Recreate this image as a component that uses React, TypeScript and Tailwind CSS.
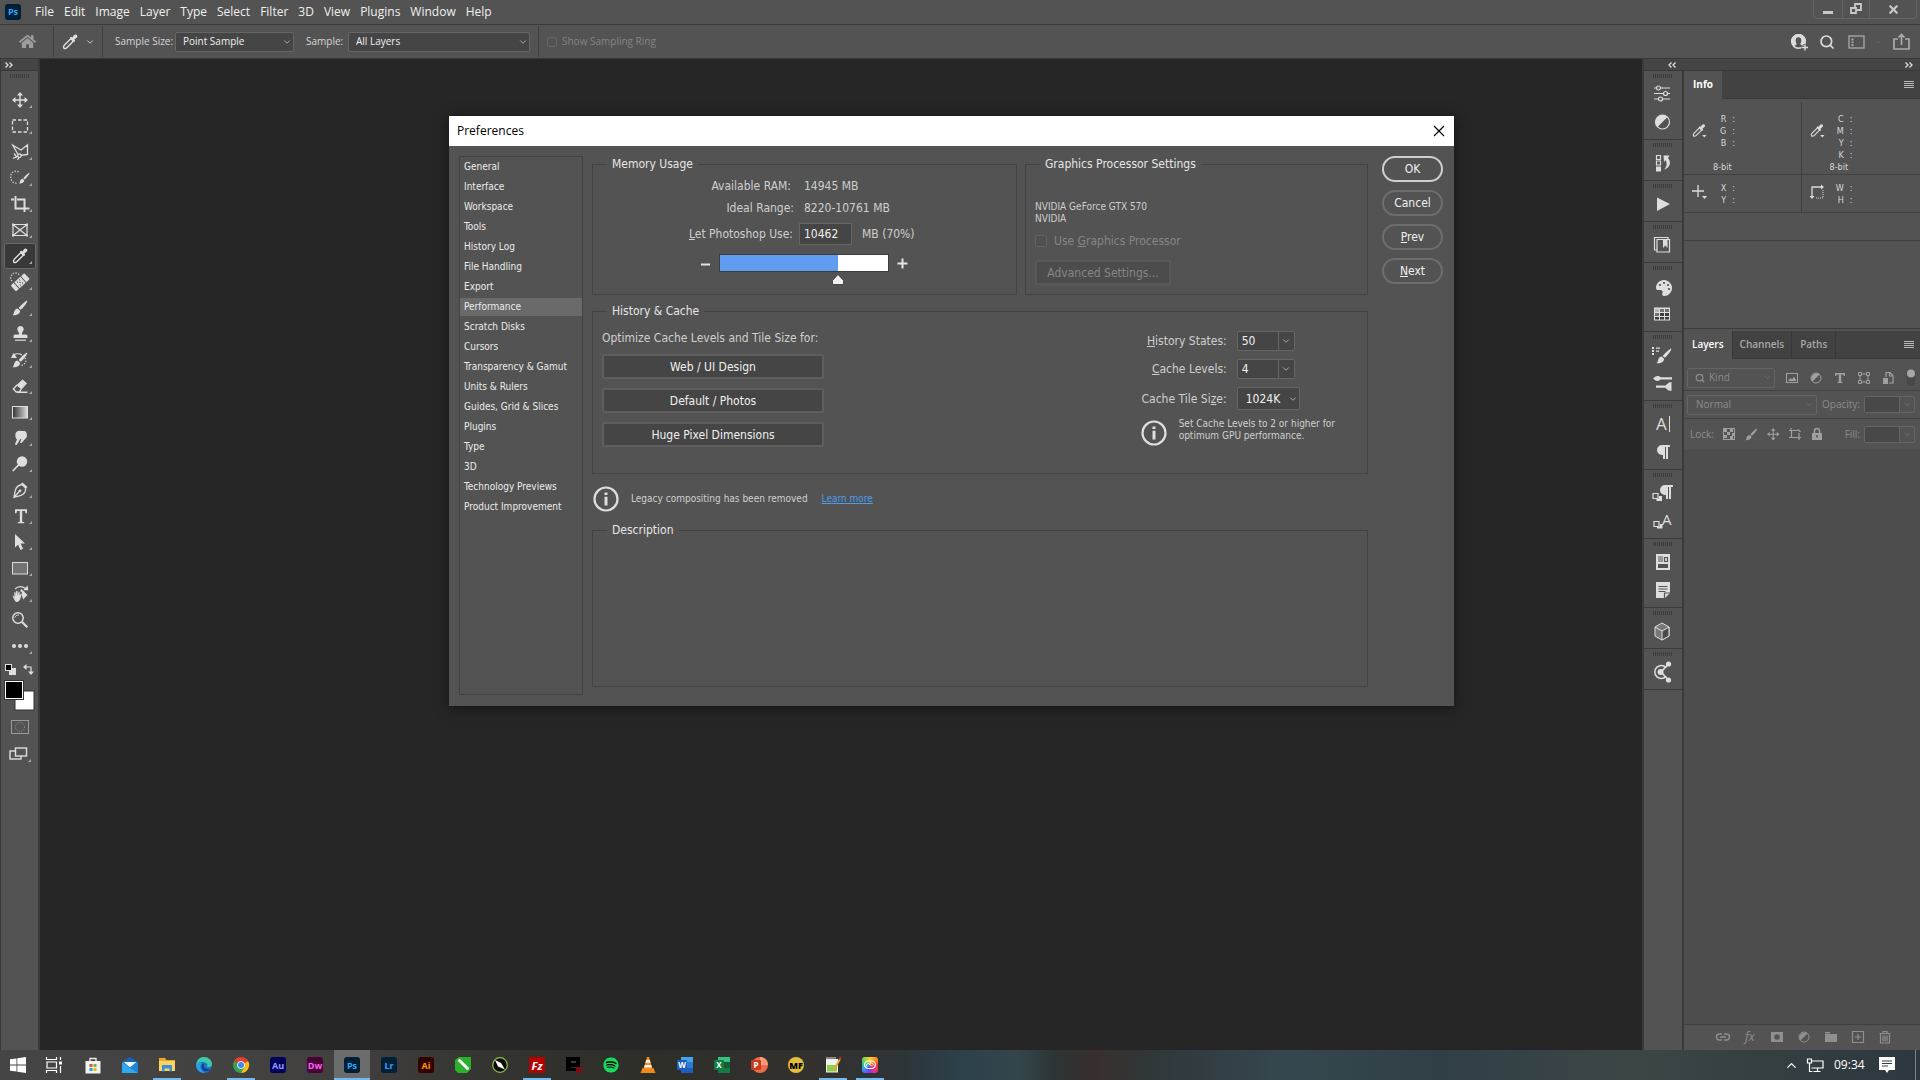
import React, { useState } from 'react'
import { ChevronDown, ChevronUp, Search, X } from 'lucide-react'
import { FaPalette, FaParagraph, FaSpotify, FaHome } from 'react-icons/fa'

const UI_FONT = "font-['Open_Sans','Noto_Sans',sans-serif]"
const DIALOG_FONT = "font-['DejaVu_Sans_Condensed','DejaVu_Sans',sans-serif]"

const MENUS = ['File', 'Edit', 'Image', 'Layer', 'Type', 'Select', 'Filter', '3D', 'View', 'Plugins', 'Window', 'Help']

const SECTIONS = [
  'General',
  'Interface',
  'Workspace',
  'Tools',
  'History Log',
  'File Handling',
  'Export',
  'Performance',
  'Scratch Disks',
  'Cursors',
  'Transparency & Gamut',
  'Units & Rulers',
  'Guides, Grid & Slices',
  'Plugins',
  'Type',
  '3D',
  'Technology Previews',
  'Product Improvement',
]

function Glyph({
  w,
  h,
  className = '',
  children,
}: {
  w: number
  h: number
  className?: string
  children: React.ReactNode
}) {
  return (
    <svg
      width={w}
      height={h}
      viewBox={`0 0 ${w} ${h}`}
      fill="none"
      stroke="none"
      aria-hidden="true"
      className={`shrink-0 overflow-visible ${className}`}
    >
      {children}
    </svg>
  )
}

/* Shared drawings, 16x16 */
function EyedropperShape() {
  return (
    <>
      <path d="M9 4.500 2.500 11c-.9.9-1.300 2.600-.6 3.200.6.700 2.300.3 3.200-.6L11.500 7" stroke="currentColor" strokeWidth="1.400" />
      <path
        d="M8 3.600 9.300 2.700l1 .8L12 1.200c.8-1 2-1 2.800-.2s.8 2-.2 2.800L12.400 5.600l.8 1-.9 1.400-1.300-.2L8 4.800Z"
        fill="currentColor"
      />
    </>
  )
}

function BrushShape() {
  return (
    <>
      <path d="M14.800.5c.5.300.6.9.3 1.400C13.300 5 11.200 7.600 8.700 9.800L6.600 7.900C9 5.300 11.500 2.700 14.800.5Z" fill="currentColor" />
      <path d="M5.700 8.600 8 10.700c.3 2.600-2.600 4.800-7.400 4.500C2.300 13.900 1.600 12.500 2.700 10.600c.7-1.300 1.700-1.900 3-2Z" fill="currentColor" />
    </>
  )
}

function MoveShape() {
  return (
    <>
      <path d="M8 2v12M2 8h12" stroke="currentColor" strokeWidth="1.400" />
      <path d="M8 0 11 3.500H5ZM8 16l3-3.500H5ZM0 8l3.500-3v6ZM16 8l-3.500-3v6Z" fill="currentColor" />
    </>
  )
}

const TOOLS: { name: string; icon: React.ReactNode }[] = [
  { name: 'Move', icon: <MoveShape /> },
  {
    name: 'Rectangular Marquee',
    icon: <rect x="0.500" y="2" width="15" height="12" stroke="currentColor" strokeWidth="1.300" strokeDasharray="3.500 2" />,
  },
  {
    name: 'Polygonal Lasso',
    icon: (
      <path
        d="M6 10.500.800 1.200 9 6l6.500-5.200v9.700L8.500 11.500M7.500 9.800a1.800 1.800 0 1 0 .1 0ZM6 12 1 14.500M5 13.500 2 9.500M7.200 13.200 5.500 16"
        stroke="currentColor"
        strokeWidth="1.300"
      />
    ),
  },
  {
    name: 'Quick Selection',
    icon: (
      <>
        <path d="M8.500 3A5.200 6 0 1 0 7 14" stroke="currentColor" strokeWidth="1.300" strokeDasharray="1.200 1.600" transform="translate(-2 -1)" />
        <g transform="translate(6.500 2.500) scale(.72)">
          <BrushShape />
        </g>
      </>
    ),
  },
  {
    name: 'Crop',
    icon: <path d="M3.500 0v12.500H15M-1 3.500h3M5 3.500h7.500V16M14 12.500h3.500" stroke="currentColor" strokeWidth="2" />,
  },
  {
    name: 'Frame',
    icon: (
      <>
        <path d="M1 2.500h14v11H1ZM1 2.500l14 11M15 2.500l-14 11" stroke="currentColor" strokeWidth="1.200" />
        <path d="M0 1.500h2v2H0ZM14 1.500h2v2h-2ZM0 12.500h2v2H0ZM14 12.500h2v2h-2Z" fill="currentColor" />
      </>
    ),
  },
  { name: 'Eyedropper', icon: <EyedropperShape /> },
  {
    name: 'Healing Brush',
    icon: (
      <>
        <path d="M8 1.500A4.500 4.500 0 0 0 1 8" stroke="currentColor" strokeWidth="1.300" strokeDasharray="1.200 1.500" transform="translate(-1 -1)" />
        <g transform="rotate(-42 8 8.500)">
          <path d="M-1 5.500Q-1 4.500 0 4.500h3v8H0q-1 0-1-1ZM13 4.500h3.500q1 0 1 1v6q0 1-1 1H13ZM4 4.500h8v8H4Z" fill="currentColor" />
          <path d="M6 6.500h1M9 6.500h1M6 10.500h1M9 10.500h1M7.500 8.500h1" stroke="#424242" strokeWidth="1.400" />
        </g>
      </>
    ),
  },
  { name: 'Brush', icon: <BrushShape /> },
  {
    name: 'Clone Stamp',
    icon: (
      <>
        <path d="M8.500 0a3.200 3.200 0 0 1 2.500 5.200C10 6.500 9.800 7.500 9.900 8.500H14q1.500 0 1.500 1.500v2h-14v-2q0-1.500 1.500-1.500h4.100c.1-1-.1-2-1.100-3.300A3.200 3.200 0 0 1 8.500 0Z" fill="currentColor" />
        <path d="M3 14.200h11" stroke="currentColor" strokeWidth="1.200" />
      </>
    ),
  },
  {
    name: 'History Brush',
    icon: (
      <>
        <BrushShape />
        <path d="M1 3.200C4 1.400 8 1.700 10 3" stroke="currentColor" strokeWidth="1.200" />
        <path d="M1.500 1 5 6h-6Z" fill="currentColor" />
        <path d="M13 6c2 3 .5 6-3.500 7.500" stroke="currentColor" strokeWidth="1.300" strokeDasharray="1.200 1.600" />
      </>
    ),
  },
  {
    name: 'Eraser',
    icon: (
      <>
        <path d="m10.500 2 4 3.500-5 5.500L5 7.200Z" fill="currentColor" stroke="currentColor" />
        <path d="M5 7 1.300 11l3 3h3l2-2.800M5 14.200h10.500" stroke="currentColor" strokeWidth="1.400" />
      </>
    ),
  },
  {
    name: 'Gradient',
    icon: (
      <>
        <defs>
          <linearGradient id="tool-gradient">
            <stop stopColor="#333" />
            <stop offset="1" stopColor="#ddd" />
          </linearGradient>
        </defs>
        <rect x="0.500" y="2.500" width="15" height="11.500" fill="url(#tool-gradient)" stroke="currentColor" />
      </>
    ),
  },
  {
    name: 'Smudge',
    icon: (
      <path
        d="M3.500 3.500C4.500 1 7 .5 9 1h4c1.500 1 2.300 3 1.800 5.500-.3 1.700-2 2.500-3 4L9.500 13l-1.600-.3 1.500-3.500-1-.3-3.600 5.800c-.6.800-2 .3-1.600-.9L5 9.500c-1.500-1-2-3.500-1.500-6Z"
        fill="currentColor"
      />
    ),
  },
  {
    name: 'Dodge',
    icon: (
      <>
        <circle cx="10" cy="5.500" r="5.200" fill="currentColor" />
        <path d="M6.500 9 .8 15" stroke="currentColor" strokeWidth="1.800" />
      </>
    ),
  },
  {
    name: 'Pen',
    icon: (
      <>
        <path d="m10 2.500 3.500 3.300c.5 3-1 6-4.500 7.500l-7 2 1.200-6.500C4.200 5 6.500 3 10 2.500ZM2.500 14.800l5-5.500" stroke="currentColor" strokeWidth="1.300" />
        <circle cx="8" cy="8.800" r="1.400" fill="currentColor" />
        <path d="m10.500.5 5 4.500-1.600 1.600-5-4.500Z" fill="currentColor" />
      </>
    ),
  },
  {
    name: 'Horizontal Type',
    icon: <path d="M3 1.200h12v4h-1.500L13 3h-2.800v10.800l2 .4v1.100H5.800v-1.100l2-.4V3H5l-.5 2.200H3Z" fill="currentColor" />,
  },
  {
    name: 'Path Selection',
    icon: <path d="M3 0v13.500l3-2.800L8.500 16l2.600-1.300L8.700 9.600H13Z" fill="currentColor" />,
  },
  {
    name: 'Rectangle',
    icon: <rect x="0.500" y="2.500" width="15" height="11.500" fill="#737373" stroke="currentColor" />,
  },
  {
    name: 'Rotate View',
    icon: (
      <>
        <path d="M3 3C6 0 10 0 13.500 2.500" stroke="currentColor" strokeWidth="1.200" />
        <path d="m15.500-.500.8 4.800h-5ZM9.500 3 15.500 9 11 13.500 9.800 9V6L8 5Z" fill="currentColor" />
        <path d="M.5 9.500c.6-.3 1.200 0 1.600.8l.7.9-.6-4.500c0-1 1.200-1 1.400 0l.4 2.600.1-4c.1-.9 1.300-.9 1.400 0l.2 3.900.7-3.200c.3-.8 1.400-.6 1.300.3l-.4 3.500.9-1.700c.5-.7 1.500-.3 1.300.5-.8 3-1.200 7.200-4.600 7.400C3 16.200 2 13 .5 9.500Z" fill="currentColor" />
      </>
    ),
  },
  {
    name: 'Zoom',
    icon: (
      <>
        <circle cx="6" cy="6" r="5.200" stroke="currentColor" strokeWidth="1.500" />
        <path d="M3 5.500C3.500 3.500 5 3 7 3" stroke="currentColor" />
        <path d="m10 10 5.300 5.300" stroke="currentColor" strokeWidth="2.200" />
      </>
    ),
  },
  {
    name: 'More Tools',
    icon: (
      <>
        <circle cx="2" cy="8" r="2" fill="currentColor" />
        <circle cx="8" cy="8" r="2" fill="currentColor" />
        <circle cx="14" cy="8" r="2" fill="currentColor" />
      </>
    ),
  },
]

function Grip() {
  return <div className="h-1 w-5 bg-[repeating-linear-gradient(90deg,#3c3c3c_0_1px,#535353_1px_2px)]" />
}

function MenuBar() {
  return (
    <header className="flex h-6 items-center">
      <span className="ml-[5px] flex size-4 items-center justify-center rounded-[3px] bg-[#001e36] text-[9px] font-bold text-[#31a8ff]">
        Ps
      </span>
      <nav className="ml-[9px] flex">
        {MENUS.map((m) => (
          <button key={m} type="button" className="px-[5px] text-[12px] leading-6 text-[#f0f0f0]">
            {m}
          </button>
        ))}
      </nav>
      <div className="mr-[3px] ml-auto flex h-[19px] self-start rounded-b-sm border border-t-0 border-[#646464] text-[#c8c8c8]">
        <button type="button" aria-label="Minimize" className="flex w-7 items-end justify-center pb-1">
          <span className="h-[3px] w-[10px] bg-current" />
        </button>
        <button type="button" aria-label="Restore" className="flex w-7 items-center justify-center border-x border-[#646464]">
          <Glyph w={12} h={12}>
            <path d="M5 1h6v6H5Z" stroke="currentColor" strokeWidth="1.800" />
            <path d="M1 5h5v5H1Z" fill="#535353" stroke="currentColor" strokeWidth="1.800" />
          </Glyph>
        </button>
        <button type="button" aria-label="Close" className="flex w-[46px] items-center justify-center">
          <X size={13} strokeWidth={4} />
        </button>
      </div>
    </header>
  )
}

function OptionSelect({ id, value, className }: { id: string; value: string; className: string }) {
  return (
    <div className={`relative flex h-5 items-center ${className}`}>
      <select
        id={id}
        className="h-full w-full appearance-none rounded-[2px] border border-[#666] bg-[#454545] pl-[7px] text-[10px] text-[#f0f0f0]"
      >
        <option>{value}</option>
      </select>
      <ChevronDown size={10} className="pointer-events-none absolute right-[2px] text-[#bdbdbd]" />
    </div>
  )
}

function OptionsBar() {
  return (
    <div className="flex h-[35px] items-center border-y border-[#383838] text-[10px] text-[#d6d6d6]">
      <button type="button" aria-label="Home" className="ml-[19px] text-[#9d9d9d]">
        <FaHome size={17} />
      </button>
      <span className="ml-[17px] h-[31px] w-px bg-[#404040]" />
      <button type="button" aria-label="Eyedropper presets" className="ml-2 flex items-center gap-[7px] text-[#e0e0e0]">
        <Glyph w={16} h={16}>
          <EyedropperShape />
        </Glyph>
        <ChevronDown size={10} />
      </button>
      <span className="ml-[7px] h-[31px] w-px bg-[#404040]" />
      <label htmlFor="sample-size" className="ml-3 w-[60px]">
        Sample Size:
      </label>
      <OptionSelect id="sample-size" value="Point Sample" className="w-[119px]" />
      <label htmlFor="sample" className="ml-3 w-[42px]">
        Sample:
      </label>
      <OptionSelect id="sample" value="All Layers" className="w-[182px]" />
      <span className="ml-2 h-[31px] w-px bg-[#404040]" />
      <label className="ml-2 flex items-center gap-[5px] text-[#848484]">
        <input type="checkbox" disabled className="size-[10px] appearance-none rounded-[2px] border border-[#666]" />
        Show Sampling Ring
      </label>
      <div className="mr-[10px] ml-auto flex items-center text-[#dcdcdc]">
        <button type="button" aria-label="Account">
          <Glyph w={18} h={18}>
            <circle cx="8.500" cy="8.500" r="6.800" stroke="currentColor" strokeWidth="1.500" />
            <path
              d="M8.500 1C13 1 16 4.500 16 8.500l-3.600 4.300c-.8-.9-2-1-2.200-1.800 1.500-1.500 2-6.700-1.700-6.700S5.300 9.500 6.800 11c-.2.900-1.600.9-2.600 2.300L1 9C1 4.500 4.500 1 8.500 1Z"
              fill="currentColor"
            />
            <path d="M15 11v7M11.500 14.500h7" stroke="#535353" strokeWidth="3" />
            <path d="M15 11.500v6M12 14.500h6" stroke="currentColor" strokeWidth="1.400" />
          </Glyph>
        </button>
        <button type="button" aria-label="Search" className="ml-[11px]">
          <Search size={16} strokeWidth={2.5} />
        </button>
        <button type="button" aria-label="Workspace" className="ml-[13px] flex items-center gap-2 text-[#aaa]">
          <Glyph w={17} h={14}>
            <rect x="1" y="1" width="15" height="12" stroke="currentColor" strokeWidth="1.300" />
            <path d="M3.500 3.500h2v2h-2ZM3.500 6.500h2v1.500h-2ZM3.500 9h2v2h-2Z" fill="currentColor" />
          </Glyph>
          <ChevronDown size={10} className="text-[#666]" />
        </button>
        <button type="button" aria-label="Share" className="ml-[10px] text-[#aaa]">
          <Glyph w={17} h={17}>
            <path d="M5 6H1v10h15V6h-4M8.500 12V2M5.500 4.500l3-3 3 3" stroke="currentColor" strokeWidth="1.700" />
          </Glyph>
        </button>
      </div>
    </div>
  )
}

function DoubleChevron({ left }: { left?: boolean }) {
  return (
    <Glyph w={8} h={6} className="text-[#e0e0e0]">
      <path
        d={left ? 'M3.500.500 1 3l2.500 2.500M7.500.500 5 3l2.500 2.500' : 'M.500.500 3 3 .500 5.500M4.500.500 7 3 4.500 5.500'}
        stroke="currentColor"
        strokeWidth="1.300"
      />
    </Glyph>
  )
}

function Toolbar() {
  const [tool, setTool] = useState('Eyedropper')

  return (
    <aside className="flex w-10 shrink-0 flex-col border-x border-[#3a3a3a] border-r-2 text-[#dedede]">
      <div className="flex h-3 items-center border-b border-[#383838] bg-[#454545] pl-1">
        <DoubleChevron />
      </div>
      <div className="flex flex-col items-center pt-[3px]">
        <Grip />
        <div className="mt-[9px] flex flex-col">
          {TOOLS.map(({ name, icon }) => (
            <button
              key={name}
              type="button"
              aria-label={name}
              onClick={() => setTool(name)}
              className={`flex h-[26px] w-8 items-center justify-center rounded-[2px] border ${
                tool === name ? 'border-[#6a6a6a] bg-[#383838]' : 'border-transparent'
              }`}
            >
              <Glyph w={30} h={24}>
                <g transform="translate(7 4)">{icon}</g>
                {name !== 'Zoom' && <path d="M27 17v3h-3Z" fill="#a8a8a8" />}
              </Glyph>
            </button>
          ))}
        </div>
        <div className="flex h-5 w-[30px] items-center gap-[7px]">
          <Glyph w={11} h={11}>
            <rect x="4" y="4" width="7" height="7" fill="#dedede" />
            <rect x="0.500" y="0.500" width="6" height="6" fill="#000" stroke="#dedede" />
          </Glyph>
          <Glyph w={11} h={11}>
            <path d="M2 3h6v6" stroke="currentColor" strokeWidth="1.200" />
            <path d="M0 3 3.500 0v6ZM8 11 5 7.500h6Z" fill="currentColor" />
          </Glyph>
        </div>
        <Glyph w={31} h={31} className="mt-px">
          <rect x="11" y="11" width="19" height="19" fill="#fff" stroke="#333" />
          <rect x="0.500" y="0.500" width="19" height="19" fill="#fff" stroke="#333" />
          <rect x="2" y="2" width="16" height="16" fill="#000" />
        </Glyph>
        <button type="button" aria-label="Quick Mask" className="mt-[9px] text-[#9a9a9a]">
          <Glyph w={18} h={14}>
            <rect x="0.500" y="0.500" width="17" height="13" stroke="currentColor" />
            <circle cx="9" cy="7" r="4.500" stroke="currentColor" strokeDasharray="1 1.400" />
          </Glyph>
        </button>
        <button type="button" aria-label="Screen Mode" className="mt-3">
          <Glyph w={22} h={16}>
            <rect x="1" y="5" width="11" height="8" stroke="currentColor" strokeWidth="1.400" />
            <rect x="6.500" y="2" width="11" height="8" fill="#535353" stroke="currentColor" strokeWidth="1.400" />
            <path d="M22 13v3h-3Z" fill="#a8a8a8" />
          </Glyph>
        </button>
      </div>
    </aside>
  )
}

const DOCK_GROUPS: { name: string; icon: React.ReactNode }[][] = [
  [
    {
      name: 'Properties',
      icon: (
        <>
          <path d="M0 2h16M0 7.500h16M0 13h16" stroke="currentColor" strokeWidth="1.200" />
          <g fill="#535353" stroke="currentColor" strokeWidth="1.200">
            <circle cx="4.500" cy="2" r="2" />
            <circle cx="11.500" cy="7.500" r="2" />
            <circle cx="6.500" cy="13" r="2" />
          </g>
        </>
      ),
    },
    {
      name: 'Adjustments',
      icon: (
        <>
          <circle cx="8.500" cy="8" r="7" stroke="currentColor" strokeWidth="1.200" />
          <path d="M3.500 13A7 7 0 0 1 13.500 3Z" fill="currentColor" />
        </>
      ),
    },
  ],
  [
    {
      name: 'History',
      icon: (
        <>
          <path d="M2.500.500h4v4h-4ZM2.500 6h4v4h-4Z" stroke="currentColor" strokeWidth="1.200" />
          <path d="M2 11.500h5v5H2Z" fill="currentColor" />
          <path d="M9.500.500h6L14 3c4 5 1.500 10-4 11.500 3-3 3.500-6 1.500-9.500L10 7Z" fill="currentColor" />
        </>
      ),
    },
  ],
  [{ name: 'Actions', icon: <path d="M3 1.500 16 8 3 15Z" fill="currentColor" /> }],
  [
    {
      name: 'Libraries',
      icon: (
        <>
          <path d="M2.500 13H.5V.5H14V2M3 2.500h12.500V15H3Z" stroke="currentColor" strokeWidth="1.200" />
          <path d="M9 3h4.500v8L11.300 8.500 9 11Z" fill="currentColor" />
        </>
      ),
    },
  ],
  [
    {
      name: 'Color',
      icon: (
        <g transform="translate(17 2) scale(-1 1)">
          <FaPalette x="-1" y="0" width="18" height="13" preserveAspectRatio="none" color="#dedede" />
        </g>
      ),
    },
    {
      name: 'Swatches',
      icon: (
        <>
          <path d="M0 1.500h16v13H0Z" fill="currentColor" />
          <path d="M1 3h4v3H1Z" fill="#b5b5b5" />
          <path d="M6 3h4v3H6ZM11 3h4v3h-4ZM1 7h4v3H1Z" fill="#707070" />
          <path d="M6 7h4v3H6ZM11 7h4v3h-4ZM1 11h4v2.500H1ZM6 11h4v2.500H6ZM11 11h4v2.500h-4Z" fill="#3c3c3c" />
        </>
      ),
    },
  ],
  [
    {
      name: 'Brush Settings',
      icon: (
        <>
          <path d="M-2 0h2v2h-2ZM2 .5h4v1.300H2ZM-2 3h2v2h-2ZM2 3.500h3v1.300H2ZM-2 6h2v2h-2Z" fill="currentColor" />
          <g transform="translate(2 1)">
            <BrushShape />
          </g>
        </>
      ),
    },
    {
      name: 'Brushes',
      icon: (
        <>
          <path d="M-1 3.500C2 0 5.500.5 6.500 2.300H18v2.300H6.500C5 6.500 1.500 6.500-1 3.500ZM2 10.500h9v2.300H2Z" fill="currentColor" />
          <path d="M10 11.500c2-1 4-4.500 7.500-4.500v9c-4 0-5.500-3-7.500-4.500Z" fill="currentColor" />
        </>
      ),
    },
  ],
  [
    {
      name: 'Character',
      icon: (
        <>
          <text x="2" y="14" fontSize="17" fill="currentColor" fontFamily="Open Sans">
            A
          </text>
          <path d="M15.500 0v16" stroke="currentColor" />
        </>
      ),
    },
    { name: 'Paragraph', icon: <FaParagraph x="1" y="0" width="15" height="15" color="#dedede" /> },
  ],
  [
    {
      name: 'Paragraph Styles',
      icon: (
        <>
          <FaParagraph x="4" y="-1" width="12" height="13" color="#dedede" />
          <path d="M-1 8.500h5v5h-5Z" fill="#535353" stroke="currentColor" strokeWidth="1.200" />
          <path d="M5 11h3v5H2.500v-2H5Z" fill="currentColor" />
        </>
      ),
    },
    {
      name: 'Character Styles',
      icon: (
        <>
          <text x="8" y="12" fontSize="15" fill="currentColor" fontFamily="Open Sans">
            A
          </text>
          <path d="M0 8.500h5v5H0Z" fill="#535353" stroke="currentColor" strokeWidth="1.200" />
          <path d="M6 11h2.500v4.500H3V14h3Z" fill="currentColor" />
        </>
      ),
    },
  ],
  [
    {
      name: 'Layer Comps',
      icon: (
        <>
          <path d="M2 0h14v16H2Z" fill="currentColor" />
          <path d="M4 3h5M4 5h5M4 7h5M10.500 3.500h3v4h-3Z" stroke="#535353" strokeWidth="1.200" />
          <path d="M4 10h10v4H4Z" fill="#535353" />
        </>
      ),
    },
    {
      name: 'Notes',
      icon: (
        <>
          <path d="M2 0h14v11l-5 5H2Z" fill="currentColor" />
          <path d="M4.500 4.500h9M4.500 7h9M4.500 9.500h7M10.500 16v-5H16" stroke="#535353" strokeWidth="1.200" />
        </>
      ),
    },
  ],
  [
    {
      name: '3D',
      icon: (
        <>
          <path d="M8 0 15 4v9l-7 4-7-4V4Z" fill="#777" stroke="currentColor" />
          <path d="M8 8v9l7-4V4Z" fill="#4a4a4a" />
          <path d="m1 4 7 4 7-4M8 8v9M15 4v9l-7 4" stroke="currentColor" />
        </>
      ),
    },
  ],
  [
    {
      name: 'Share',
      icon: (
        <>
          <path d="M12 3.500A6.500 6.500 0 1 0 12 12.500" stroke="currentColor" strokeWidth="1.500" />
          <path d="m14.500 0-7.500 8 7.500 8" stroke="currentColor" strokeWidth="1.800" />
          <circle cx="6.500" cy="8" r="3" fill="currentColor" />
          <circle cx="14.500" cy="0" r="2.600" fill="currentColor" />
          <circle cx="14.500" cy="16" r="2.600" fill="currentColor" />
        </>
      ),
    },
  ],
]

function Dock() {
  return (
    <div className="flex w-[38px] shrink-0 flex-col text-[#dedede]">
      {DOCK_GROUPS.map((group) => (
        <div key={group[0].name} className="flex flex-col items-center border-b border-[#3a3a3a] pt-[3px] pb-[3px]">
          <Grip />
          <div className="flex flex-col pt-[2px]">
            {group.map(({ name, icon }) => (
              <button key={name} type="button" aria-label={name} className="flex h-7 w-8 items-center justify-center">
                <Glyph w={22} h={22}>
                  <g transform="translate(2 3)">{icon}</g>
                </Glyph>
              </button>
            ))}
          </div>
        </div>
      ))}
    </div>
  )
}

function PanelMenu() {
  return (
    <button type="button" aria-label="Panel menu" className="mr-[6px] ml-auto text-[#b8b8b8]">
      <Glyph w={10} h={8}>
        <path d="M0 .500h10M0 2.500h10M0 4.500h10M0 6.500h10" stroke="currentColor" />
      </Glyph>
    </button>
  )
}

function Readout({ icon, rows, tall }: { icon: React.ReactNode; rows: string[]; tall?: boolean }) {
  return (
    <div className="flex flex-1 items-start pl-2">
      <div className={`text-[#dcdcdc] ${tall ? 'mt-[10px]' : 'mt-[3px]'}`}>
        <Glyph w={16} h={16}>
          {icon}
        </Glyph>
      </div>
      <div className="ml-[3px] w-6 text-right">
        {rows.map((r) => (
          <div key={r} className="flex justify-end gap-[6px]">
            <span>{r}</span>
            <span>:</span>
          </div>
        ))}
      </div>
    </div>
  )
}

function ColorSampler() {
  return (
    <g transform="scale(.85) translate(0 1)">
      <EyedropperShape />
      <path d="M12 13h5l-2.500 3Z" fill="currentColor" />
    </g>
  )
}

function InfoPanel() {
  return (
    <section className="flex h-[258px] flex-col border-b border-[#3a3a3a] text-[#d8d8d8]">
      <div className="flex h-7 items-center border-b border-[#3a3a3a] bg-[#424242]">
        <h2 className="flex h-7 items-center bg-[#535353] px-[9px] text-[10px] font-bold text-white">Info</h2>
        <PanelMenu />
      </div>
      <div className={`mt-[3px] flex h-[73px] border-b border-[#404040] pr-[2px] text-[9px] leading-3 ${DIALOG_FONT}`}>
        <div className="flex-1 border-r border-[#404040] pt-[11px]">
          <Readout tall icon={<ColorSampler />} rows={['R', 'G', 'B']} />
          <div className="mt-3 ml-[29px]">8-bit</div>
        </div>
        <div className="flex-1 pt-[11px]">
          <Readout tall icon={<ColorSampler />} rows={['C', 'M', 'Y', 'K']} />
          <div className="ml-[28px]">8-bit</div>
        </div>
      </div>
      <div className={`flex h-[38px] border-b border-[#404040] pr-[2px] text-[9px] leading-3 ${DIALOG_FONT}`}>
        <div className="flex flex-1 items-center border-r border-[#404040]">
          <Readout
            icon={
              <>
                <path d="M6 0v12M0 6h12" stroke="currentColor" strokeWidth="1.300" />
                <path d="M10 11h5l-2.500 3Z" fill="currentColor" />
              </>
            }
            rows={['X', 'Y']}
          />
        </div>
        <div className="flex flex-1 items-center">
          <Readout
            icon={
              <>
                <path d="M2 12V2h10" stroke="currentColor" strokeWidth="1.300" />
                <path d="M11-.500 14 2l-3 2.500ZM-.500 11h5L2 14Z" fill="currentColor" />
                <path d="M13 5v8H6" stroke="currentColor" strokeDasharray="1 1" />
              </>
            }
            rows={['W', 'H']}
          />
        </div>
      </div>
      <div className="h-7 border-b border-[#404040]" />
    </section>
  )
}

const FILTER_ICONS = [
  <>
    <rect x="0.500" y="1.500" width="11" height="9" stroke="currentColor" />
    <path d="m2 9 2.500-3L6 7.500l2-3L10.500 9Z" fill="currentColor" />
  </>,
  <>
    <circle cx="6" cy="6" r="5" stroke="currentColor" />
    <path d="M2.500 9.500A5 5 0 0 1 9.500 2.500Z" fill="currentColor" />
  </>,
  <path d="M1 1h10v3H9.800l-.3-1.500H7.200v7.300l1.300.2v1h-5v-1l1.300-.2V2.500H2.500L2.200 4H1Z" fill="currentColor" />,
  <>
    <path d="M2 2h8v8H2Z" stroke="currentColor" />
    <path d="M.500.500h3v3h-3ZM8.500.500h3v3h-3ZM.500 8.500h3v3h-3ZM8.500 8.500h3v3h-3Z" fill="#535353" stroke="currentColor" />
  </>,
  <>
    <path d="M4 5V.500h4L11 3.500V11H7M7.500.500V4H11" stroke="currentColor" strokeWidth="1.200" />
    <path d="M1 6h5v6H1Z" fill="currentColor" />
  </>,
]

const LOCK_ICONS = [
  <>
    <rect x="0.500" y="0.500" width="11" height="11" stroke="currentColor" />
    <path d="M1 1h3v3H1ZM7 1h3v3H7ZM4 4h3v3H4ZM9 5h2v3H9ZM1 7h3v3H1ZM7 8h3v3H7Z" fill="currentColor" />
  </>,
  <g transform="scale(.8)">
    <BrushShape />
  </g>,
  <g transform="scale(.78)">
    <MoveShape />
  </g>,
  <path d="M2 0v2M0 2.500h9M2.500 2v8M0 9.500h12M10 5v7M9 1.500l2.500 2.500" stroke="currentColor" strokeWidth="1.200" />,
  <>
    <path d="M1 5h10v7H1Z" fill="currentColor" />
    <path d="M3.500 5V3a2.500 2.500 0 0 1 5 0v2" stroke="currentColor" strokeWidth="1.500" />
    <path d="M6 7v2.500" stroke="#535353" strokeWidth="1.500" />
  </>,
]

const FOOTER_ICONS: { name: string; icon: React.ReactNode }[] = [
  {
    name: 'Link layers',
    icon: <path d="M6 4H3.500a3 3 0 0 0 0 6H6M8 4h2.500a3 3 0 0 1 0 6H8M4 7h6" stroke="currentColor" strokeWidth="1.400" />,
  },
  {
    name: 'Layer style',
    icon: (
      <text x="2" y="11" fontSize="12" fontStyle="italic" fill="currentColor" fontFamily="Open Sans">
        fx
      </text>
    ),
  },
  {
    name: 'Layer mask',
    icon: (
      <>
        <path d="M1 2h12v10H1Z" fill="currentColor" />
        <circle cx="7" cy="7" r="2.800" fill="#535353" />
      </>
    ),
  },
  {
    name: 'Adjustment layer',
    icon: (
      <>
        <circle cx="7" cy="7" r="5" stroke="currentColor" />
        <path d="M3.500 10.500A5 5 0 0 1 10.500 3.500Z" fill="currentColor" />
      </>
    ),
  },
  { name: 'New group', icon: <path d="M1 2h5v1.500H1ZM1 4h12v8H1Z" fill="currentColor" /> },
  {
    name: 'New layer',
    icon: <path d="M1.500 1.500h11v11h-11ZM7 4v6M4 7h6" stroke="currentColor" strokeWidth="1.200" />,
  },
  {
    name: 'Delete layer',
    icon: <path d="M1.500 3.500h11M5 3V1.500h4V3M2.500 4v9h9V4M5 5.500v6M7 5.500v6M9 5.500v6" stroke="currentColor" strokeWidth="1.200" />,
  },
]

function PercentField({ id }: { id: string }) {
  return (
    <div className="flex h-[17px] w-[51px] rounded-[2px] border border-[#646464] text-[#777]">
      <input id={id} type="text" disabled className="w-0 flex-1 bg-[#484848]" />
      <button type="button" disabled aria-label={`${id} options`} className="flex w-[15px] items-center justify-center border-l border-[#646464]">
        <ChevronDown size={9} />
      </button>
    </div>
  )
}

function LayersPanel() {
  return (
    <section className="mt-[2px] flex flex-1 flex-col text-[10px] text-[#8c8c8c]">
      <div className="flex h-7 items-center border-b border-[#3a3a3a] bg-[#424242]">
        <button type="button" className="h-7 border-r border-[#383838] bg-[#535353] px-2 font-semibold text-white">
          Layers
        </button>
        <button type="button" className="h-7 border-r border-[#383838] px-[7px] font-semibold text-[#a8a8a8]">
          Channels
        </button>
        <button type="button" className="h-7 border-r border-[#383838] px-2 font-semibold text-[#a8a8a8]">
          Paths
        </button>
        <PanelMenu />
      </div>
      <div className="flex h-8 items-center border-b border-[#424242] pr-1 pl-[3px] pt-[6px]">
        <div className="relative flex items-center">
          <Search size={10} strokeWidth={3} className="absolute left-2" />
          <select aria-label="Layer filter" disabled className="h-5 w-[88px] appearance-none rounded-[2px] border border-[#646464] pl-[21px]">
            <option>Kind</option>
          </select>
          <ChevronDown size={9} className="absolute right-[3px] text-[#707070]" />
        </div>
        <div className="ml-[11px] flex gap-3 text-[#a0a0a0]">
          {FILTER_ICONS.map((icon, i) => (
            <Glyph key={i} w={12} h={12}>
              {icon}
            </Glyph>
          ))}
        </div>
        <Glyph w={10} h={18} className="ml-auto">
          <rect x="0.500" y="1" width="9" height="16" rx="4.500" fill="#484848" />
          <circle cx="5" cy="4.500" r="4" fill="#a8a8a8" />
        </Glyph>
      </div>
      <div className="flex h-7 items-center border-b border-[#424242] pr-[5px] pl-[3px]">
        <div className="relative flex items-center">
          <select aria-label="Blend mode" disabled className="h-5 w-[130px] appearance-none rounded-[2px] border border-[#646464] pl-2">
            <option>Normal</option>
          </select>
          <ChevronDown size={9} className="absolute right-[3px] text-[#707070]" />
        </div>
        <label htmlFor="opacity" className="mr-1 ml-auto">
          Opacity:
        </label>
        <PercentField id="opacity" />
      </div>
      <div className="flex h-[30px] items-center pr-[5px] pl-[6px]">
        <span className="w-[33px]">Lock:</span>
        <div className="flex gap-[10px] text-[#a0a0a0]">
          {LOCK_ICONS.map((icon, i) => (
            <Glyph key={i} w={12} h={12}>
              {icon}
            </Glyph>
          ))}
        </div>
        <label htmlFor="fill" className="mr-1 ml-auto">
          Fill:
        </label>
        <PercentField id="fill" />
      </div>
      <div className="flex-1 bg-[#4d4d4d]" />
      <div className="flex h-[26px] items-center justify-end gap-[13px] border-t border-[#404040] pr-7 pb-[2px] text-[#8f8f8f]">
        {FOOTER_ICONS.map(({ name, icon }) => (
          <button key={name} type="button" aria-label={name}>
            <Glyph w={14} h={14}>
              {icon}
            </Glyph>
          </button>
        ))}
      </div>
    </section>
  )
}

function RightSide() {
  return (
    <aside className="flex w-[278px] shrink-0 flex-col border-l-2 border-[#3a3a3a]">
      <div className="flex h-3 items-center justify-between border-b border-[#383838] bg-[#454545] pr-[7px] pl-6">
        <DoubleChevron left />
        <DoubleChevron />
      </div>
      <div className="flex flex-1">
        <Dock />
        <div className="flex flex-1 flex-col border-l-2 border-[#3a3a3a]">
          <InfoPanel />
          <LayersPanel />
        </div>
      </div>
    </aside>
  )
}

function InfoIcon() {
  return (
    <Glyph w={26} h={26} className="text-[#dedede]">
      <circle cx="13" cy="13" r="11.500" stroke="currentColor" strokeWidth="2.200" />
      <path d="M11.500 6.500h3v2.500h-3ZM11.500 10.800h3v8.700h-3Z" fill="currentColor" />
    </Glyph>
  )
}

function Group({ title, className, children }: { title: string; className?: string; children?: React.ReactNode }) {
  return (
    <fieldset className={`min-w-0 border border-[#434343] ${className ?? ''}`}>
      <legend className="ml-[14px] px-[5px] text-[#e6e6e6]">{title}</legend>
      {children}
    </fieldset>
  )
}

function StepField({ id, value }: { id: string; value: string }) {
  return (
    <div className="flex h-5 w-[58px] rounded-[2px] border border-[#666] bg-[#454545]">
      <input id={id} type="text" defaultValue={value} className="w-0 flex-1 pl-1 text-[#f0f0f0]" />
      <button type="button" aria-label={`${id} options`} className="flex w-4 items-center justify-center border-l border-[#666] text-[#bdbdbd]">
        <ChevronDown size={10} />
      </button>
    </div>
  )
}

function PreferencesDialog() {
  const [section, setSection] = useState('Performance')
  const [ram, setRam] = useState(10462)
  const percent = Math.round((ram / 14945) * 100)

  const wideButton =
    'h-[25px] w-[222px] rounded-[2px] border-2 border-[#5e5e5e] bg-[#454545] leading-none text-[#f0f0f0]'
  const pill = 'h-[26px] w-full rounded-full border-2 leading-none text-[#f0f0f0]'

  return (
    <div
      role="dialog"
      aria-label="Preferences"
      className={`absolute top-[57px] left-[409px] w-[1005px] bg-[#535353] text-[12px] leading-4 text-[#cfcfcf] shadow-[0_2px_12px_rgba(0,0,0,0.5)] ${DIALOG_FONT}`}
    >
      <div className={`flex h-[30px] items-center justify-between bg-white pr-[9px] pl-2 text-[12px] text-black ${UI_FONT}`}>
        <h1>Preferences</h1>
        <button type="button" aria-label="Close">
          <Glyph w={12} h={12}>
            <path d="m1 1 10 10M11 1 1 11" stroke="currentColor" strokeWidth="1.200" />
          </Glyph>
        </button>
      </div>

      <div className="flex pt-[10px] pr-[11px] pb-[11px] pl-[10px]">
        <ul className="w-[124px] border border-[#434343] pt-px text-[10px] text-[#ececec]">
          {SECTIONS.map((s) => (
            <li key={s} className="h-5">
              <button
                type="button"
                onClick={() => setSection(s)}
                className={`block h-[18px] w-full pl-1 text-left whitespace-nowrap ${section === s ? 'bg-[#6a6a6a]' : ''}`}
              >
                {s}
              </button>
            </li>
          ))}
        </ul>

        <div className="ml-[9px] flex flex-1 flex-col pb-2">
          <div className="flex gap-2">
            <Group title="Memory Usage" className="w-[425px]">
              <div className="grid grid-cols-[202px_1fr] items-center gap-x-1 pt-[3px]">
                <span className="pr-1 text-right leading-[22px]">Available RAM:</span>
                <span className="pl-[5px]">14945 MB</span>
                <span className="pr-px text-right leading-[22px]">Ideal Range:</span>
                <span className="pl-[5px]">8220-10761 MB</span>
                <label htmlFor="ram" className="mt-1 pr-[2px] text-right">
                  <u>L</u>et Photoshop Use:
                </label>
                <div className="mt-1 flex items-center gap-[10px]">
                  <input
                    id="ram"
                    type="text"
                    value={ram}
                    onChange={(e) => setRam(Number(e.target.value) || 0)}
                    className="h-[22px] w-[53px] border border-[#666] bg-[#454545] pl-1 text-[#f0f0f0]"
                  />
                  <span>MB ({percent}%)</span>
                </div>
              </div>
              <div className="mt-[9px] flex items-start pb-[9px] pl-[107px] text-[#e6e6e6]">
                <button type="button" aria-label="Less" className="mt-[5px]" onClick={() => setRam(ram - 100)}>
                  <Glyph w={11} h={10}>
                    <path d="M1 5.500h9" stroke="currentColor" strokeWidth="2" />
                  </Glyph>
                </button>
                <div className="relative mx-2 h-[31px] w-[170px]">
                  <div className="h-[18px] border border-[#3c3c3c] bg-white">
                    <div className="h-full bg-[#609cf0]" style={{ width: `${percent}%` }} />
                  </div>
                  <div className="absolute top-5 -translate-x-1/2" style={{ left: `${percent}%` }}>
                    <Glyph w={13} h={11}>
                      <path d="M6.500.500 12 6.500v4H1v-4Z" fill="#f0f0f0" stroke="#333" strokeWidth=".8" />
                    </Glyph>
                  </div>
                  <input
                    type="range"
                    aria-label="Memory for Photoshop"
                    min={0}
                    max={14945}
                    value={ram}
                    onChange={(e) => setRam(Number(e.target.value))}
                    className="absolute inset-0 opacity-0"
                  />
                </div>
                <button type="button" aria-label="More" className="mt-1" onClick={() => setRam(ram + 100)}>
                  <Glyph w={11} h={11}>
                    <path d="M.500 5.500h10M5.500.500v10" stroke="currentColor" strokeWidth="2" />
                  </Glyph>
                </button>
              </div>
            </Group>

            <Group title="Graphics Processor Settings" className="flex-1">
              <div className="pt-[29px] pl-[9px]">
                <p className="text-[10px] leading-3">
                  NVIDIA GeForce GTX 570
                  <br />
                  NVIDIA
                </p>
                <label className="mt-2 flex items-center gap-[7px] text-[#868686]">
                  <input type="checkbox" disabled className="size-3 appearance-none rounded-[2px] border border-[#616161] bg-[#505050]" />
                  <span>
                    Use <u>G</u>raphics Processor
                  </span>
                </label>
                <button type="button" disabled className="mt-[11px] h-[25px] w-[136px] rounded-[2px] border-2 border-[#595959] bg-[#4c4c4c] leading-none text-[#868686]">
                  Advanced Settings...
                </button>
              </div>
            </Group>
          </div>

          <Group title="History & Cache" className="mt-2">
            <div className="flex justify-between pt-[11px] pr-8 pb-[26px] pl-[9px]">
              <div className="flex flex-col items-start">
                <p className="mb-2">Optimize Cache Levels and Tile Size for:</p>
                <div className="flex flex-col gap-[9px]">
                  <button type="button" className={wideButton}>
                    Web / UI Design
                  </button>
                  <button type="button" className={wideButton}>
                    Default / Photos
                  </button>
                  <button type="button" className={wideButton}>
                    Huge Pixel Dimensions
                  </button>
                </div>
              </div>
              <div className="pt-px">
                <div className="grid grid-cols-[86px_auto] items-center gap-x-[10px] gap-y-2">
                  <label htmlFor="history-states" className="text-right whitespace-nowrap">
                    <u>H</u>istory States:
                  </label>
                  <StepField id="history-states" value="50" />
                  <label htmlFor="cache-levels" className="text-right whitespace-nowrap">
                    <u>C</u>ache Levels:
                  </label>
                  <StepField id="cache-levels" value="4" />
                  <label htmlFor="tile-size" className="text-right whitespace-nowrap">
                    Cache Tile Si<u>z</u>e:
                  </label>
                  <div className="relative flex w-[63px] items-center">
                    <select
                      id="tile-size"
                      className="h-[23px] w-full appearance-none rounded-[2px] border border-[#666] bg-[#454545] pl-2 text-[#f0f0f0]"
                    >
                      <option>1024K</option>
                    </select>
                    <ChevronDown size={10} className="pointer-events-none absolute right-[2px] text-[#bdbdbd]" />
                  </div>
                </div>
                <div className="mt-2 flex items-end gap-3">
                  <InfoIcon />
                  <p className="pb-1 text-[10px] leading-3 whitespace-nowrap">
                    Set Cache Levels to 2 or higher for
                    <br />
                    optimum GPU performance.
                  </p>
                </div>
              </div>
            </div>
          </Group>

          <div className="mt-3 flex items-center pl-px text-[10px]">
            <InfoIcon />
            <span className="ml-3">Legacy compositing has been removed</span>
            <a href="#learn-more" className="ml-[14px] text-[#4a9be8] underline">
              Learn more
            </a>
          </div>

          <Group title="Description" className="mt-[10px] h-[165px]" />
        </div>

        <div className="ml-[14px] flex w-[61px] flex-col gap-2">
          <button type="button" className={`${pill} border-[#cfcfcf]`}>
            OK
          </button>
          <button type="button" className={`${pill} border-[#6e6e6e]`}>
            Cancel
          </button>
          <button type="button" className={`${pill} border-[#6e6e6e]`}>
            <u>P</u>rev
          </button>
          <button type="button" className={`${pill} border-[#6e6e6e]`}>
            <u>N</u>ext
          </button>
        </div>
      </div>
    </div>
  )
}

function AppTile({ label, bg, fg }: { label: string; bg: string; fg: string }) {
  return (
    <span className={`flex size-4 items-center justify-center rounded-[3px] text-[9px] leading-none font-bold ${bg} ${fg}`}>
      {label}
    </span>
  )
}

function OfficeIcon({ letter, dark, mid, light }: { letter: string; dark: string; mid: string; light: string }) {
  return (
    <Glyph w={16} h={16}>
      <path d="M4 0h12v16H4Z" fill={mid} />
      <path d="M4 0h12v5H4Z" fill={light} />
      <path d="M4 11h12v5H4Z" fill={dark} />
      <rect y="3" width="10" height="10" rx="1" fill={dark} />
      <text x="5" y="11" fontSize="8" fontWeight="700" textAnchor="middle" fill="#fff" fontFamily="Open Sans">
        {letter}
      </text>
    </Glyph>
  )
}

const TASKS: { name: string; open?: boolean; active?: boolean; icon: React.ReactNode }[] = [
  {
    name: 'Microsoft Store',
    icon: (
      <Glyph w={16} h={17}>
        <path d="M5 4V1.500h6V4" stroke="#e8e8e8" strokeWidth="1.400" />
        <path d="M.500 4h15v12.500H.500Z" fill="#f2f2f2" />
        <path d="M4.500 7H7.500v3h-3Z" fill="#e74c2b" />
        <path d="M8.500 7h3v3h-3Z" fill="#7cb82f" />
        <path d="M4.500 11h3v3h-3Z" fill="#1fa2e4" />
        <path d="M8.500 11h3v3h-3Z" fill="#f5b51d" />
      </Glyph>
    ),
  },
  {
    name: 'Mail',
    icon: (
      <Glyph w={16} h={16}>
        <path d="M0 5 8 0l8 5v11H0Z" fill="#1565b5" />
        <path d="M1.500 5h13L8 10.500Z" fill="#f1f6fb" />
        <path d="m0 5 8 6 8-6v11H0Z" fill="#2ea8ee" />
        <path d="m16 5-8 6 8 5Z" fill="#1b85d6" />
      </Glyph>
    ),
  },
  {
    name: 'File Explorer',
    open: true,
    icon: (
      <Glyph w={16} h={15}>
        <path d="M0 1h6l1.500 2H16v11H0Z" fill="#eca81e" />
        <path d="M0 4h16v10H0Z" fill="#fbd465" />
        <path d="M3 8h10v6.500h-2.500v-3h-5v3H3Z" fill="#3f8fd0" />
      </Glyph>
    ),
  },
  {
    name: 'Edge',
    icon: (
      <Glyph w={16} h={16}>
        <circle cx="8" cy="8" r="8" fill="#1b74c9" />
        <path d="M.5 6C2 1.500 5 0 8 0c4.500 0 7.500 3 8 6.500.3 3-2.500 4-5 3.500 1.500-2.500-1-5-4.500-5C4 4.500 2 5.500 0 8Z" fill="#3fc9a4" />
        <path d="M6 6c-3 3-1 8 3 10-6 0-9-4-9-8 1-3 4-3.500 6-2Z" fill="#2c9ee6" />
        <path d="M8.500 7C6 8.500 8 13 14.500 12.500c-3 3-9 1.500-9-3C5.500 7.500 7 6.500 8.500 7Z" fill="#123f80" />
      </Glyph>
    ),
  },
  {
    name: 'Chrome',
    open: true,
    icon: (
      <Glyph w={16} h={16}>
        <path d="M8 8 1.100 4A8 8 0 0 1 14.900 4Z" fill="#e34133" />
        <path d="M8 8 1.100 4A8 8 0 0 0 8 16l4-6Z" fill="#35a353" />
        <path d="M8 8l6.900-4.200A8 8 0 0 1 8 16l3.500-6Z" fill="#fbc116" />
        <path d="M8 4.300h7L8 8Z" fill="#e34133" />
        <circle cx="8" cy="8" r="3.800" fill="#fff" />
        <circle cx="8" cy="8" r="3" fill="#4285f4" />
      </Glyph>
    ),
  },
  { name: 'Audition', icon: <AppTile label="Au" bg="bg-[#00005b]" fg="text-[#9999ff]" /> },
  { name: 'Dreamweaver', icon: <AppTile label="Dw" bg="bg-[#470137]" fg="text-[#ff61f6]" /> },
  { name: 'Photoshop', open: true, active: true, icon: <AppTile label="Ps" bg="bg-[#001e36]" fg="text-[#31a8ff]" /> },
  { name: 'Lightroom', icon: <AppTile label="Lr" bg="bg-[#001e36]" fg="text-[#31a8ff]" /> },
  { name: 'Illustrator', icon: <AppTile label="Ai" bg="bg-[#330000]" fg="text-[#ff9a00]" /> },
  {
    name: 'CorelDRAW',
    icon: (
      <Glyph w={16} h={16}>
        <path d="M4 0h12v12l-4 4H3L0 13V3Z" fill="#2bb02d" />
        <path d="m4.500 3.500 8 8" stroke="#fff" strokeWidth="3" strokeLinecap="round" />
      </Glyph>
    ),
  },
  {
    name: 'Vector Editor',
    icon: (
      <Glyph w={16} h={16}>
        <circle cx="8" cy="8" r="7.300" fill="#0a0a0a" stroke="#8cc63f" strokeWidth="1.200" />
        <path d="m3 3 6 3 4 6.500L6 9.500Z" fill="#fff" />
      </Glyph>
    ),
  },
  {
    name: 'FileZilla',
    open: true,
    icon: (
      <span className="flex size-4 items-center justify-center bg-[#b50000] text-[11px] leading-none font-bold text-white italic">
        Fz
      </span>
    ),
  },
  {
    name: 'Epic Pen',
    icon: (
      <Glyph w={17} h={16}>
        <path d="M0 0h14v10H5v1h7v3H0Z" fill="#000" />
        <path d="M5 4h5v2H5Z" fill="#3a3a36" />
        <path d="M10 10h6v6h-6Z" fill="#7d0b0f" />
      </Glyph>
    ),
  },
  { name: 'Spotify', icon: <span className="rounded-full bg-black"><FaSpotify size={16} color="#1ed760" /></span> },
  {
    name: 'VLC',
    icon: (
      <Glyph w={16} h={16}>
        <path d="M2.500 11h11l2 5H.500Z" fill="#f08a12" />
        <path d="M7 0h2l3.500 12q-4.500 2.500-9 0Z" fill="#f58a1f" />
        <path d="M6.200 3h3.600l.8 2.700H5.400ZM4.800 8h6.400l.7 2.500H4.100Z" fill="#f3f3f3" />
      </Glyph>
    ),
  },
  { name: 'Word', icon: <OfficeIcon letter="W" dark="#1b5ebe" mid="#2b7cd3" light="#41a5ee" /> },
  { name: 'Excel', icon: <OfficeIcon letter="X" dark="#107c41" mid="#185c37" light="#33c481" /> },
  {
    name: 'PowerPoint',
    icon: (
      <Glyph w={17} h={16}>
        <circle cx="9" cy="8" r="8" fill="#ed6c47" />
        <path d="M9 0a8 8 0 0 1 8 8H9Z" fill="#ff9a7b" />
        <rect y="3" width="10" height="10" rx="1" fill="#c43e1c" />
        <text x="5" y="11" fontSize="8" fontWeight="700" textAnchor="middle" fill="#fff" fontFamily="Open Sans">
          P
        </text>
      </Glyph>
    ),
  },
  {
    name: 'MF',
    icon: (
      <span className="flex size-4 items-center justify-center rounded-full bg-[#e6bf3a] text-[9px] leading-none font-extrabold text-black">
        MF
      </span>
    ),
  },
  {
    name: 'Notepad++',
    open: true,
    icon: (
      <Glyph w={16} h={16}>
        <path d="M1 2h12v13.500H1Z" fill="#f3f3ee" />
        <path d="M2 8h10v6.500H2Z" fill="#8ed04b" />
        <path d="M2 0v3M4 0v3M6 0v3M8 0v3M10 0v3" stroke="#dcdcdc" />
        <path d="m15 2-5 9-1.500 2" stroke="#e8a33a" strokeWidth="2" />
        <path d="m15.500 0-1 2.500" stroke="#b33" strokeWidth="2" />
      </Glyph>
    ),
  },
  {
    name: 'Creative Cloud',
    open: true,
    icon: (
      <span className="flex size-4 items-center justify-center rounded-[3px] bg-[conic-gradient(#ffd21f_0deg,#ff8a2a_50deg,#f33_90deg,#e8308c_140deg,#7a3cf0_190deg,#2a9df4_240deg,#3fd16b_290deg,#ffd21f_360deg)]">
        <Glyph w={12} h={10}>
          <rect x="0.600" y="1" width="10.800" height="7.500" rx="3.700" stroke="#fff" strokeWidth="1.200" />
          <path d="M3 6.500c-1.500-2 1-4 2.500-2.500L8 6.500M6 3.500c1.500-1.500 4 0 3 2" stroke="#fff" />
        </Glyph>
      </span>
    ),
  },
]

function Taskbar() {
  return (
    <footer className="flex h-[30px] items-stretch bg-[linear-gradient(90deg,#454545_0%,#41403f_18%,#33332f_26%,#2e2e29_34%,#33312e_42%,#2d3438_47%,#2c404b_50%,#34464b_53%,#2c3435_55%,#382f2c_57%,#30373a_60%,#35474e_67%,#303f45_75%,#3c4647_85%,#343f42_92%,#2c383e_100%)]">
      <button type="button" aria-label="Start" className="flex w-[35px] items-center justify-center text-white">
        <Glyph w={16} h={16}>
          <path d="M0 2.300 6.500 1.400v6.200H0ZM7.300 1.300 16 0v7.600H7.300ZM0 8.400h6.500v6.200L0 13.700ZM7.300 8.400H16V16l-8.700-1.300Z" fill="currentColor" />
        </Glyph>
      </button>
      <button type="button" aria-label="Task View" className="flex w-[38px] items-center justify-center text-white">
        <Glyph w={16} h={16}>
          <path d="M.500 0v2.500h10V0M.500 16v-2.500h10V16M1 5h9.500v6H1ZM14.500 0v3M14.500 9v7" stroke="currentColor" strokeWidth="1.200" />
          <path d="M13 4.500h3v3h-3Z" fill="currentColor" />
        </Glyph>
      </button>
      <nav className="ml-[2px] flex gap-px">
        {TASKS.map(({ name, open, active, icon }) => (
          <button
            key={name}
            type="button"
            aria-label={name}
            className={`flex w-9 flex-col items-center pt-[7px] ${active ? 'bg-[#6b6c6c]' : ''}`}
          >
            <span className="flex h-[21px] items-start">{icon}</span>
            {open && <span className={`h-[2px] bg-[#76b9ed] ${active ? 'w-9' : 'w-7'}`} />}
          </button>
        ))}
      </nav>
      <div className="ml-auto flex items-center text-[12px] text-white">
        <button type="button" aria-label="Hidden icons">
          <ChevronUp size={15} strokeWidth={2} />
        </button>
        <Glyph w={17} h={15} className="ml-2">
          <path d="M5 3h11v7H4.500M10.500 10v3.500M6.500 13.500h7M2.500 5v9M2.500 13.500h3" stroke="currentColor" strokeWidth="1.200" />
          <path d="M.500 1h4v4h-4Z" stroke="currentColor" strokeWidth="1.200" />
        </Glyph>
        <time className="mr-[6px] ml-[10px] w-[29px] whitespace-nowrap">09:34</time>
        <Glyph w={16} h={16} className="ml-[10px]">
          <path d="M0 0h16v13h-6l-2 3-2-3H0Z" fill="#fff" />
          <path d="M3 4h10M3 6.500h10M3 9h6" stroke="#303c42" strokeWidth="1.200" />
        </Glyph>
        <span className="mr-1 ml-5 h-[30px] w-px bg-[#7c8487]" />
      </div>
    </footer>
  )
}

export default function App() {
  return (
    <div className={`flex min-h-screen flex-col bg-[#535353] ${UI_FONT}`}>
      <MenuBar />
      <OptionsBar />
      <div className="flex flex-1">
        <Toolbar />
        <main className="relative flex-1 bg-[#262626]">
          <PreferencesDialog />
        </main>
        <RightSide />
      </div>
      <Taskbar />
    </div>
  )
}
